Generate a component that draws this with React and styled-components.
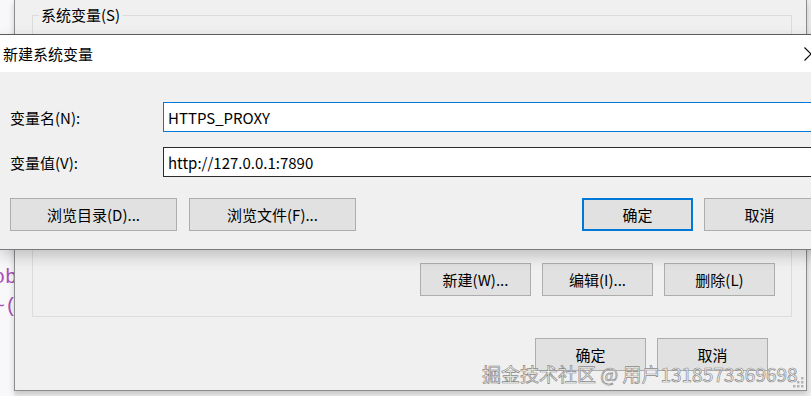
import React from 'react';
import styled, { createGlobalStyle } from 'styled-components';

const GlobalStyle = createGlobalStyle`
    html, body {
        margin: 0;
        padding: 0;
        background: #eeeeee;
    }
    body {
        font-family: "Noto Sans CJK SC", "Noto Sans", sans-serif;
        color: #000;
    }
`;

const Desktop = styled.div`
    position: relative;
    width: 811px;
    height: 396px;
    display: flex;
    align-items: flex-start;
    overflow: hidden;
    background: #eeeeee;
`;

const Editor = styled.div`
    width: 14px;
    height: 396px;
    flex-shrink: 0;
    overflow: hidden;
    background: #f8f8fa;
    padding-top: 263px;
    box-sizing: border-box;
    font-family: "Liberation Mono", monospace;
    font-size: 20px;
    line-height: 29px;
    color: #a84db8;
    div {
        margin-left: -7px;
        white-space: nowrap;
    }
`;

const BackWindow = styled.div`
    position: relative;
    width: 793px;
    height: 391px;
    flex-shrink: 0;
    box-sizing: border-box;
    background: #f0f0f0;
    border: 1px solid #8c8c8c;
    border-top: none;
    box-shadow: 0 3px 6px rgba(0, 0, 0, 0.18);
    padding: 15px 14px 0 17px;
    display: flex;
    flex-direction: column;
`;

const GroupBox = styled.div`
    height: 302px;
    box-sizing: border-box;
    border: 1px solid #dcdcdc;
    padding: 0 16px 20px 0;
    display: flex;
    flex-direction: column;
    justify-content: space-between;
`;

const GroupTitle = styled.span`
    align-self: flex-start;
    margin: -11px 0 0 6px;
    padding: 0 2px;
    background: #f0f0f0;
    font-size: 15px;
    line-height: 20px;
`;

const ButtonRow = styled.div`
    display: flex;
    justify-content: ${(p) => (p.$split ? 'space-between' : 'flex-end')};
    gap: ${(p) => p.$gap || 11}px;
    padding-right: ${(p) => p.$right || 0}px;
    margin-top: ${(p) => p.$top || 0}px;
`;

const Group = styled.div`
    display: flex;
    gap: ${(p) => p.$gap || 11}px;
`;

const Button = styled.button`
    width: ${(p) => p.$w || 111}px;
    height: 33px;
    box-sizing: border-box;
    background: #e1e1e1;
    border: ${(p) => (p.$default ? '2px solid #0078d7' : '1px solid #adadad')};
    font-family: "Noto Sans CJK SC", "Noto Sans", sans-serif;
    font-size: 15px;
    color: #000;
    padding: 0;
    cursor: pointer;
`;

const Grip = styled.svg`
    position: absolute;
    right: 2px;
    bottom: 2px;
`;

const Dialog = styled.div`
    position: absolute;
    top: 34px;
    left: 0;
    width: 834px;
    box-sizing: border-box;
    border-top: 1px solid #5c5c5c;
    border-bottom: 1px solid #7a7a7a;
    background: #f0f0f0;
    box-shadow: 0 6px 14px rgba(0, 0, 0, 0.2);
`;

const TitleBar = styled.div`
    height: 37px;
    background: #fff;
    display: flex;
    align-items: center;
    justify-content: space-between;
    padding-left: 3px;
    font-size: 15px;
`;

const CloseButton = styled.div`
    width: 46px;
    height: 37px;
    display: flex;
    align-items: center;
    justify-content: center;
`;

const Body = styled.div`
    padding: 30px 19px 18px 10px;
`;

const FieldGrid = styled.div`
    display: grid;
    grid-template-columns: 153px 1fr;
    row-gap: 15px;
    align-items: center;
    margin-bottom: 21px;
`;

const Label = styled.label`
    font-size: 15px;
`;

const Input = styled.input`
    height: 30px;
    box-sizing: border-box;
    border: 1px solid ${(p) => (p.$focused ? '#0078d7' : '#2b2b2b')};
    background: #fff;
    padding: 0 4px;
    font-family: "Noto Sans CJK SC", "Noto Sans", sans-serif;
    font-size: 15px;
    color: #000;
    outline: none;
    width: 100%;
`;

const Watermark = styled.div`
    position: absolute;
    left: 482px;
    top: 361px;
    font-size: 19px;
    line-height: 26px;
    color: rgba(255, 255, 255, 0.92);
    -webkit-text-stroke: 0.7px #8a8a8a;
    white-space: nowrap;
    pointer-events: none;
`;

function App() {
  return (
    <>
      <GlobalStyle />
      <Desktop>
        <Editor>
          <div>ob</div>
          <div>~(</div>
        </Editor>
        <BackWindow>
          <GroupBox>
            <GroupTitle>系统变量(S)</GroupTitle>
            <ButtonRow>
              <Button>新建(W)...</Button>
              <Button>编辑(I)...</Button>
              <Button>删除(L)</Button>
            </ButtonRow>
          </GroupBox>
          <ButtonRow $top={21} $right={24}>
            <Button>确定</Button>
            <Button>取消</Button>
          </ButtonRow>
          <Grip width="11" height="11" viewBox="0 0 11 11">
            {[[8, 0], [8, 4], [4, 4], [8, 8], [4, 8], [0, 8]].map(([x, y]) => (
              <rect key={`${x}-${y}`} x={x} y={y} width="2.5" height="2.5" fill="#b5b5b5" />
            ))}
          </Grip>
        </BackWindow>

        <Dialog>
          <TitleBar>
            <span>新建系统变量</span>
            <CloseButton>
              <svg width="14" height="14" viewBox="0 0 14 14">
                <path d="M0.5 0.5 L13.5 13.5 M13.5 0.5 L0.5 13.5" stroke="#000" strokeWidth="1.1" fill="none" />
              </svg>
            </CloseButton>
          </TitleBar>
          <Body>
            <FieldGrid>
              <Label>变量名(N):</Label>
              <Input $focused defaultValue="HTTPS_PROXY" />
              <Label>变量值(V):</Label>
              <Input defaultValue="http://127.0.0.1:7890" />
            </FieldGrid>
            <ButtonRow $split>
              <Group $gap={12}>
                <Button $w={167}>浏览目录(D)...</Button>
                <Button $w={167}>浏览文件(F)...</Button>
              </Group>
              <Group $gap={11}>
                <Button $default>确定</Button>
                <Button>取消</Button>
              </Group>
            </ButtonRow>
          </Body>
        </Dialog>

        <Watermark>掘金技术社区 @ 用户1318573369698</Watermark>
      </Desktop>
    </>
  );
}

export default App;
